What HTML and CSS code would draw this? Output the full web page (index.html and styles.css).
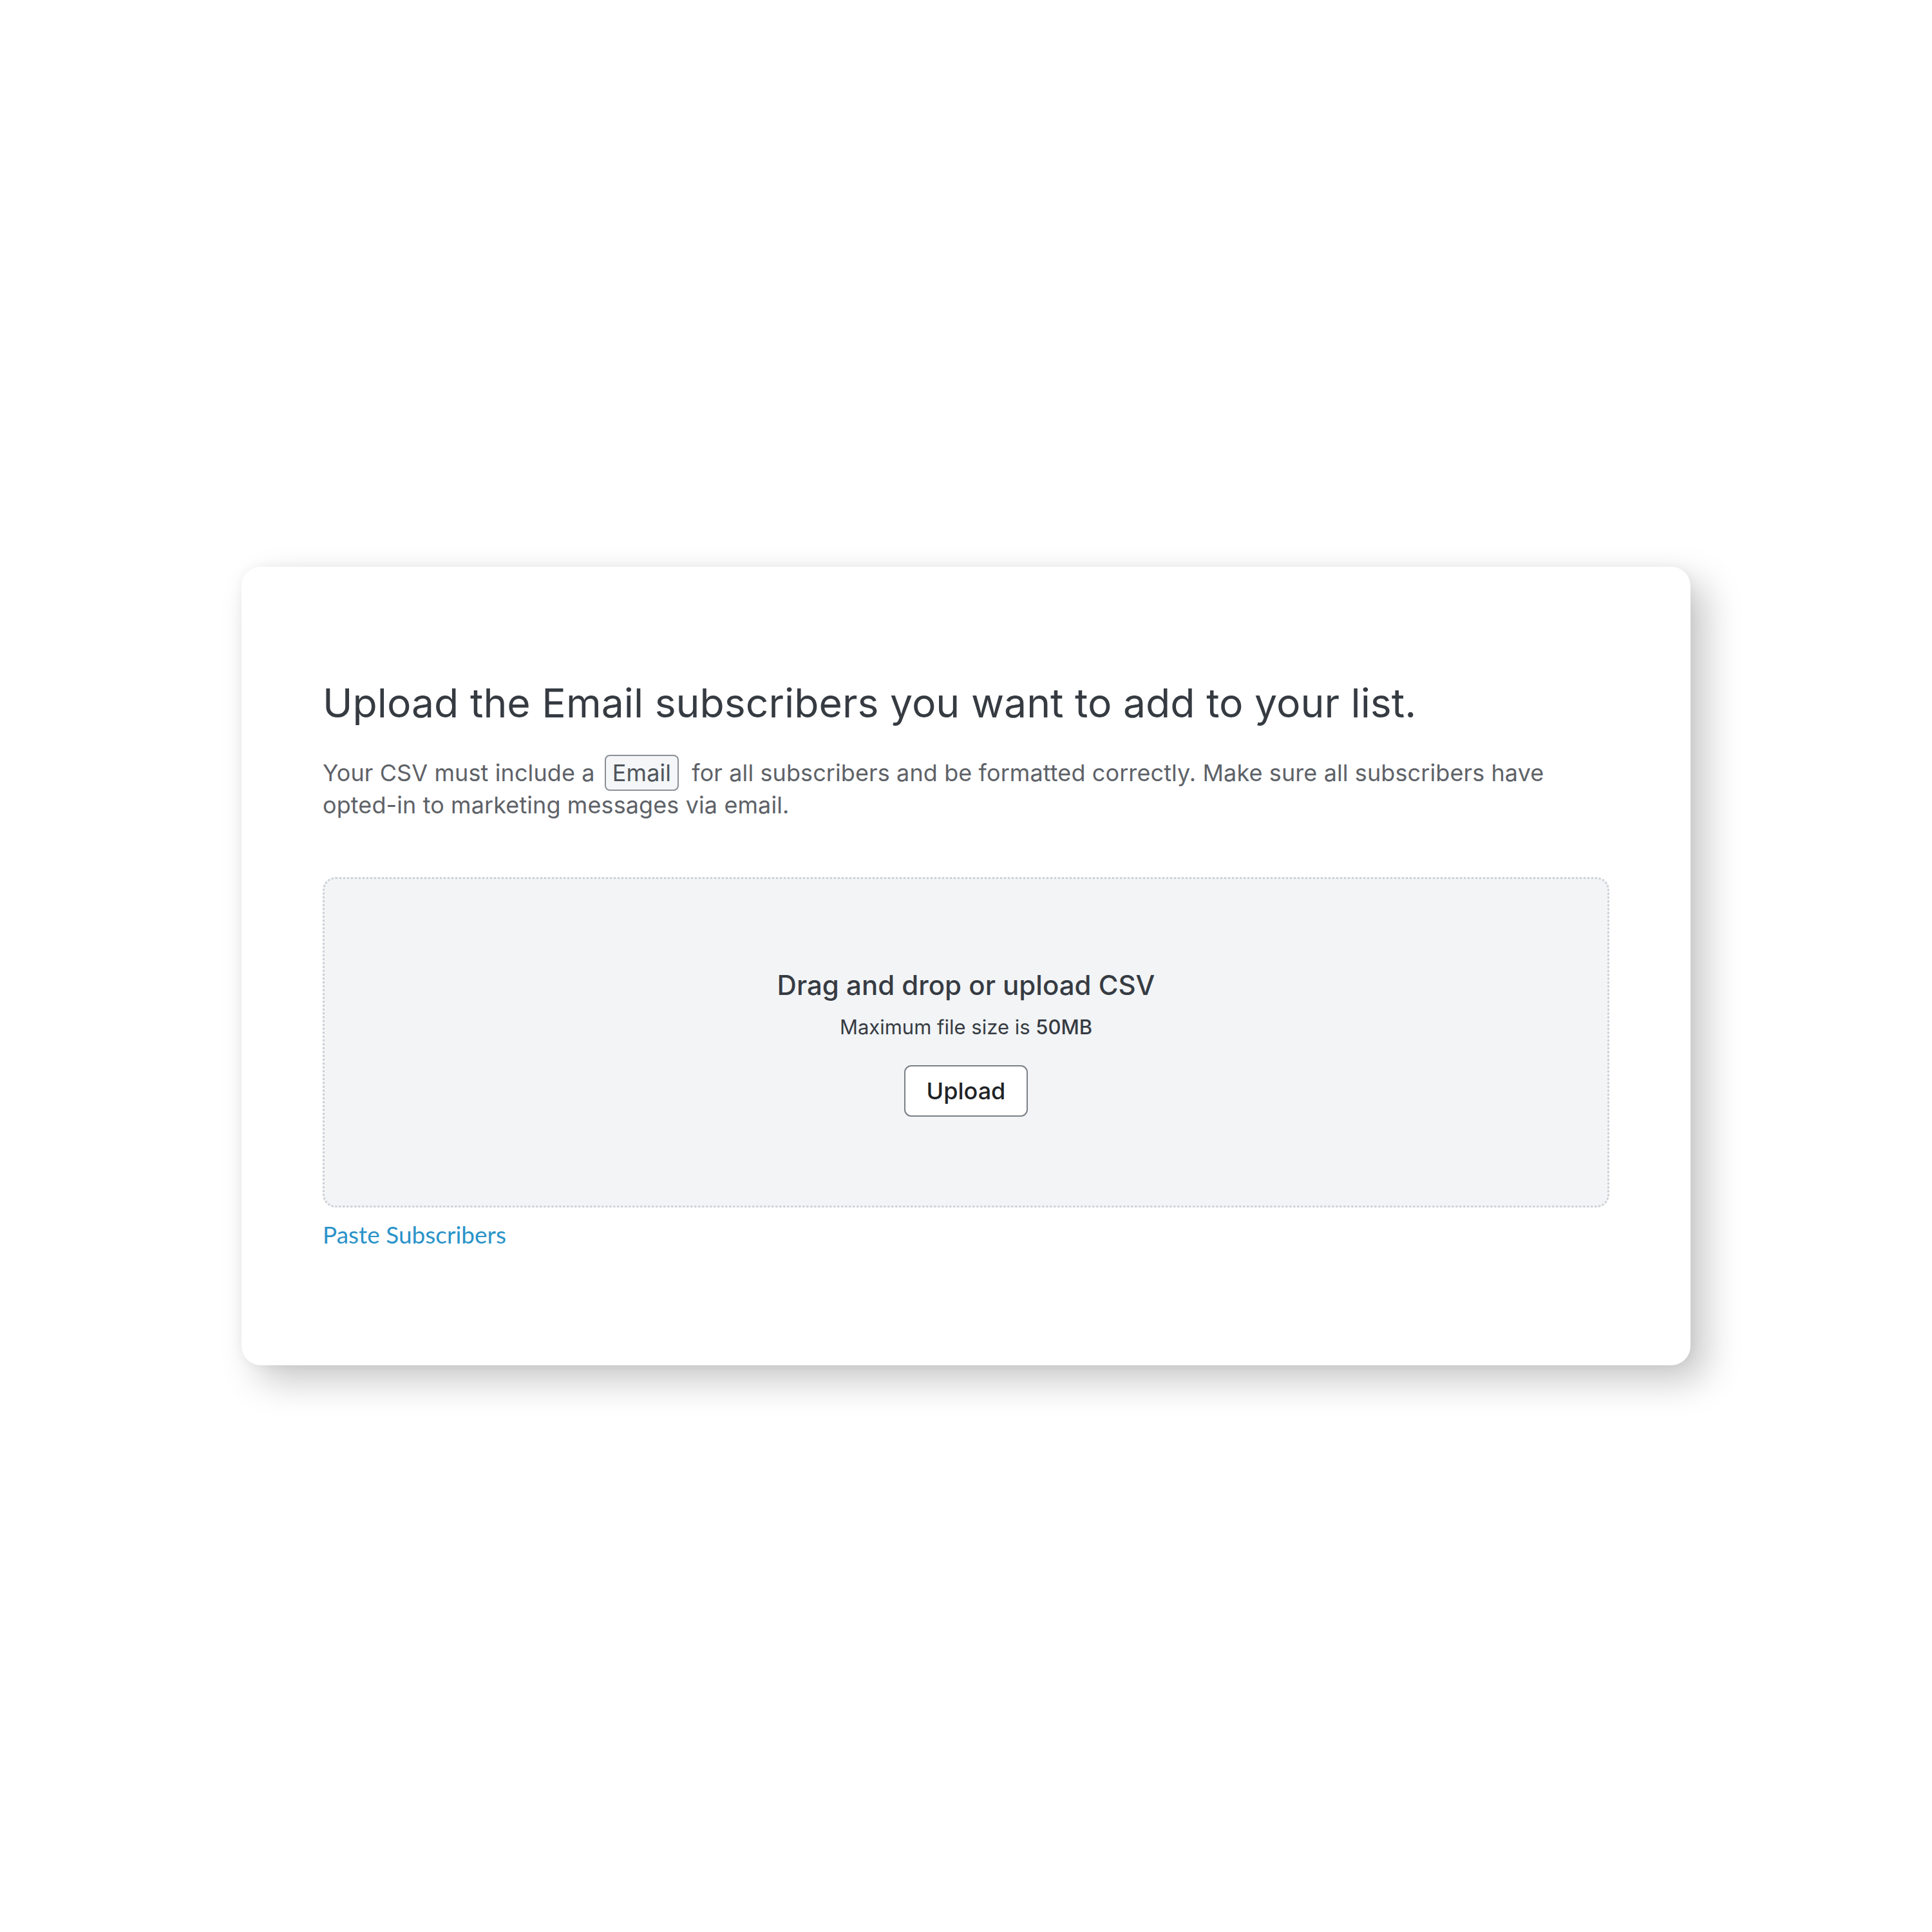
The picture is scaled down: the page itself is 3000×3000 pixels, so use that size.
FILE: index.html
```html
<!DOCTYPE html>
<html>
<head>
<meta charset="utf-8">
<link rel="stylesheet" href="styles.css">
</head>
<body>
<div class="card">
  <h1 class="title">Upload the Email subscribers you want to add to your list.</h1>
  <p class="desc">Your CSV must include a <span class="tag">Email</span> for all subscribers and be formatted correctly. Make sure all subscribers have opted-in to marketing messages via email.</p>
  <div class="dropzone">
    <div class="drop-title">Drag and drop or upload CSV</div>
    <div class="drop-sub">Maximum file size is <span class="size">50MB</span></div>
    <button class="upload-btn">Upload</button>
  </div>
  <a class="paste-link" href="#">Paste Subscribers</a>
</div>
</body>
</html>
```

FILE: styles.css
```css
html, body {
  margin: 0;
  padding: 0;
  background: #ffffff;
}
body {
  width: 3000px;
  height: 3000px;
  padding: 880px 0 0 375px;
  box-sizing: border-box;
  font-family: "Inter", "Liberation Sans", sans-serif;
}
.card {
  width: 2250px;
  height: 1240px;
  box-sizing: border-box;
  background: #ffffff;
  border-radius: 30px;
  padding: 175px 126px 0 126px;
  box-shadow: 0 0 18px rgba(0, 0, 0, 0.05), 24px 24px 56px rgba(0, 0, 0, 0.22);
}
.title {
  margin: 0;
  font-size: 62.5px;
  line-height: 72px;
  font-weight: 400;
  color: #363b42;
}
.desc {
  margin: 48px 0 0 0;
  font-size: 36px;
  line-height: 50px;
  letter-spacing: 0.1px;
  color: #5e6268;
  max-width: 1925px;
}
.tag {
  display: inline;
  border: 2px solid #8b9096;
  border-radius: 8px;
  background: #f4f6f8;
  padding: 4px 10px;
  margin: 0 10px 0 5px;
  color: #4f555c;
}
.dropzone {
  margin-top: 87px;
  height: 513px;
  box-sizing: border-box;
  background: #f2f4f6;
  border: 3px dotted #cdd0d4;
  border-radius: 20px;
  display: flex;
  flex-direction: column;
  align-items: center;
  justify-content: center;
}
.drop-title {
  font-size: 42px;
  line-height: 52px;
  font-weight: 500;
  color: #363b42;
}
.drop-sub {
  margin-top: 19px;
  font-size: 31px;
  line-height: 40px;
  color: #363b42;
}
.size {
  font-weight: 500;
}
.upload-btn {
  margin-top: 39px;
  width: 192px;
  height: 80px;
  box-sizing: border-box;
  background: #ffffff;
  border: 2px solid #7b8086;
  border-radius: 11px;
  font-family: "Inter", "Liberation Sans", sans-serif;
  font-size: 36px;
  font-weight: 500;
  color: #1f2326;
  padding: 0;
}
.paste-link {
  display: inline-block;
  margin-top: 22px;
  font-family: "Lato", "Inter", sans-serif;
  font-size: 37px;
  line-height: 40px;
  color: #2a93c9;
  text-decoration: none;
}
```
